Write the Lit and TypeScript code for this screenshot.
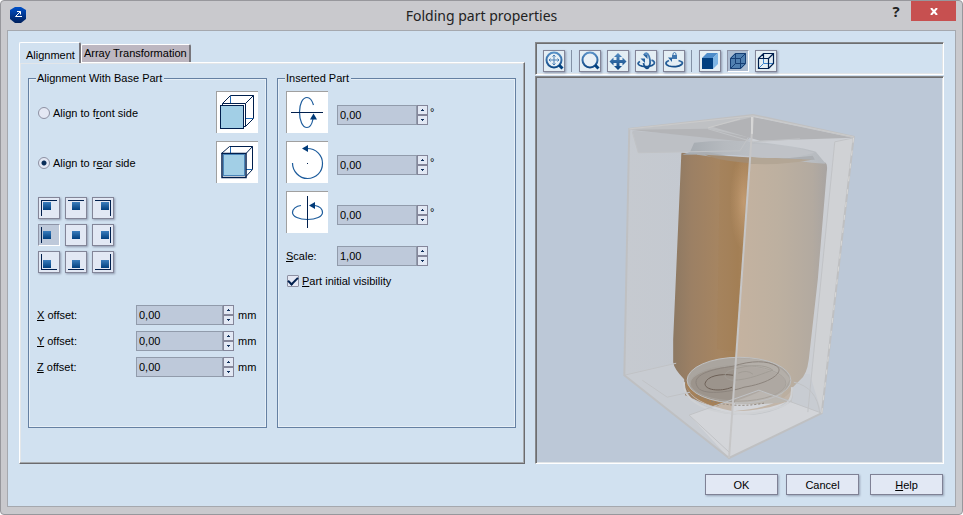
import { LitElement, html, css, svg, nothing } from "lit";
import { customElement, property, state } from "lit/decorators.js";
import { classMap } from "lit/directives/class-map.js";

const shared = css`
  * {
    box-sizing: border-box;
  }
  button,
  input {
    font: inherit;
    color: inherit;
    margin: 0;
    padding: 0;
    border-radius: 0;
  }
  svg {
    display: block;
  }
  u {
    text-underline-offset: 1px;
  }
`;

@customElement("spin-field")
export class SpinField extends LitElement {
  static styles = [
    shared,
    css`
      :host {
        display: flex;
        height: 20px;
      }
      .value {
        flex: 1;
        min-width: 0;
        padding: 0 2px;
        border: 1px solid #919bab;
        background: #bec9da;
        outline: none;
      }
      .steps {
        display: flex;
        flex-direction: column;
        width: 11px;
      }
      .step {
        flex: 1;
        min-height: 0;
        display: grid;
        place-items: center;
        border: 1px solid #84869a;
        background: #e2e8f4;
      }
    `,
  ];

  @property() value = "0,00";
  @property() label = "";

  private step(delta: number) {
    const n = Number(this.value.replace(",", ".")) + delta;
    this.value = n.toFixed(2).replace(".", ",");
  }

  render() {
    return html`
      <input
        class="value"
        type="text"
        aria-label=${this.label}
        .value=${this.value}
        @change=${(e: Event) => (this.value = (e.target as HTMLInputElement).value)}
      />
      <div class="steps">
        <button class="step" type="button" aria-label="Increase ${this.label}" @click=${() => this.step(1)}>
          <svg width="3" height="2" viewBox="0 0 3 2"><path d="M1 0h1v1h1v1H0V1h1z" fill="#10305c" /></svg>
        </button>
        <button class="step" type="button" aria-label="Decrease ${this.label}" @click=${() => this.step(-1)}>
          <svg width="3" height="2" viewBox="0 0 3 2"><path d="M0 0h3v1H2v1H1V1H0z" fill="#10305c" /></svg>
        </button>
      </div>
    `;
  }
}

const NAVY = "#003a78";
const BLUE = "#1d5c9c";

const frontBox = svg`
  <g fill="none" stroke="#001f4d">
    <path d="M14.5 5V12M30 27.5H37" stroke="#1f66b0" />
    <path d="M6.5 12.5L14.5 4.5H37.5V27.5L29.5 35.5M29.5 12.5L37.5 4.5" />
    <path d="M6.5 12.5H29.5V35.5H6.5Z" fill="#fff" />
    <rect x="4.5" y="14.5" width="23" height="23" fill="#a2cfe6" />
  </g>`;

const rearBox = svg`
  <g fill="none" stroke="#001f4d">
    <path d="M14.5 6V12M30 28.5H36" stroke="#1f66b0" />
    <path d="M5.5 12.5L13.5 5.5H36.5V28.5L29 36.5M30 12.5L36.5 5.5" />
    <rect x="6" y="12.5" width="24" height="24" fill="#fff" stroke-width="1.5" />
    <rect x="7.5" y="13.5" width="21" height="21" fill="#a2cfe6" stroke="#4a86ba" />
  </g>`;

const rotX = svg`
  <path d="M27.5 14C26 9 24 6.5 21 6.5C16.5 6.5 13.5 13 13.5 21C13.5 29.5 16.5 36.5 21 36.5C24 36.5 26 33 27 28" fill="none" stroke="${BLUE}" stroke-width="1.2" />
  <path d="M5 21.5H37" stroke="#001f4d" />
  <path d="M24 28.5L27.5 22.5L31 28.5Z" fill="${NAVY}" />`;

const rotZ = svg`
  <path d="M6.5 22C6.5 30 13 37.5 21.5 37.5S36.5 31 36.5 22.5S30 7.5 21 7.5" fill="none" stroke="${BLUE}" stroke-width="1.2" />
  <path d="M16 7.5L22 4V11Z" fill="${NAVY}" />
  <rect x="21" y="22" width="1" height="1" fill="#001f4d" />`;

const rotY = svg`
  <path d="M15 14.5C10 15 6.5 18 6.5 21.5C6.5 25.5 13 28.5 21.5 28.5S36.5 25.5 36.5 21.5C36.5 18 34 15.5 29 14.5" fill="none" stroke="${BLUE}" stroke-width="1.2" />
  <path d="M21.5 5V37" stroke="#001f4d" />
  <path d="M23 14.5L29 11V18Z" fill="${NAVY}" />`;

const picture = (content: unknown) =>
  html`<svg class="picture" width="42" height="42" viewBox="0 0 42 42" aria-hidden="true">${content}
    ${svg`<path d="M0 42V0H42" fill="none" stroke="#a0a0a0" stroke-width="2" />`}
  </svg>`;

const lens = svg`
  <circle cx="10" cy="9" r="7.5" fill="#e8f0f6" stroke="url(#ink)" stroke-width="2" />
  <path d="M15 14L18.5 17.5" stroke="#00407f" stroke-width="3" />`;

const tools: Record<string, unknown> = {
  fit: svg`${lens}<path d="M10 4V14M5 9H15M8.5 5.5L10 4L11.5 5.5M8.5 12.5L10 14L11.5 12.5M6.5 7.5L5 9L6.5 10.5M13.5 7.5L15 9L13.5 10.5" fill="none" stroke="#4a7eb4" />`,
  zoom: lens,
  pan: svg`<path d="M10 2L14 6H11.5V9H14.5V6.5L18.5 10.5L14.5 14.5V12H11.5V15H14L10 19L6 15H8.5V12H5.5V14.5L1.5 10.5L5.5 6.5V9H8.5V6H6Z" fill="url(#ink)" />`,
  orbit: svg`<path d="M8 4C9.5 1.5 11.5 1.5 13 5C14.5 9.5 14.5 14.5 12 17C10.5 18 8 16 7.5 12" fill="none" stroke="url(#ink)" stroke-width="1.8" />
    <path d="M4 10.5C1 12 1.5 14 6 15.2C10 16 16 15.5 18 13C19 11.5 18 10 15.5 9.2" fill="none" stroke="url(#ink)" stroke-width="1.8" />
    <path d="M4.5 7.5H9V12ZM7 3.5H11.5V8Z" fill="#27629f" />`,
  spin: svg`<rect x="8" y="4" width="5" height="4" fill="#3f76af" /><path d="M9 4V2.5Q10.5 .5 12 2.5V4" fill="none" stroke="#3f76af" />
    <path d="M5 9.5C1 11 1 13.5 5 15C9 16.2 15 16 17.5 13.5C19.5 11.5 18 10.5 14.5 9.5" fill="none" stroke="url(#ink)" stroke-width="1.8" />
    <path d="M4 6.5H8V11Z" fill="#27629f" />`,
  solid: svg`<path d="M2 7L7 2H18L13 7Z" fill="#4d8cca" /><path d="M13 7L18 2V13L13 18Z" fill="#7db4e4" /><rect x="2" y="7" width="11" height="11" fill="#003f80" />`,
  glass: svg`<path d="M2 7L7 2H18V13L13 18H2Z" fill="#507fb0" /><path d="M2.5 7.5H12.5V17.5H2.5ZM2.5 7.5L7.5 2.5H17.5V12.5L12.5 17.5M12.5 7.5L17.5 2.5M7.5 2.5V12.5H17.5M7.5 12.5L2.5 17.5" fill="none" stroke="#173f75" />`,
  wire: svg`<path d="M7.5 2.5V12.5H17.5M7.5 12.5L2.5 17.5" fill="none" stroke="#3c84cc" /><path d="M2.5 7.5H12.5V17.5H2.5ZM2.5 7.5L7.5 2.5H17.5V12.5L12.5 17.5M12.5 7.5L17.5 2.5M7.5 2.5V7" fill="none" stroke="#001f4d" stroke-width="1.2" />`,
};

const toolGroups = [
  [{ id: "fit", label: "Zoom to fit" }],
  [
    { id: "zoom", label: "Zoom" },
    { id: "pan", label: "Pan" },
    { id: "orbit", label: "Orbit" },
    { id: "spin", label: "Rotate around axis" },
  ],
  [
    { id: "solid", label: "Solid view" },
    { id: "glass", label: "Transparent view" },
    { id: "wire", label: "Wireframe view" },
  ],
];

const scene = svg`
  <defs>
    <linearGradient id="amber" x1="0" x2="1">
      <stop offset="0" stop-color="#8d7963" />
      <stop offset="0.12" stop-color="#9c8064" />
      <stop offset="0.3" stop-color="#a68561" />
      <stop offset="0.42" stop-color="#a48158" />
      <stop offset="0.55" stop-color="#ab875f" />
      <stop offset="1" stop-color="#b38f69" />
    </linearGradient>
    <linearGradient id="beige" x1="0" x2="1">
      <stop offset="0" stop-color="#c6b3a0" />
      <stop offset="0.5" stop-color="#bdb0a0" />
      <stop offset="0.85" stop-color="#b3aaa0" />
      <stop offset="1" stop-color="#a8a4a2" />
    </linearGradient>
    <linearGradient id="leftWall" x1="0" x2="1">
      <stop offset="0" stop-color="#c6cad0" />
      <stop offset="1" stop-color="#c2c8d1" />
    </linearGradient>
    <linearGradient id="collar" x1="0" x2="1">
      <stop offset="0" stop-color="#a3a9af" />
      <stop offset="0.3" stop-color="#b6babf" />
      <stop offset="0.75" stop-color="#c0c4c9" />
      <stop offset="1" stop-color="#b4b8bd" />
    </linearGradient>
    <radialGradient id="shine">
      <stop offset="0" stop-color="#cda57c" stop-opacity="0.7" />
      <stop offset="1" stop-color="#c8a078" stop-opacity="0" />
    </radialGradient>
    <clipPath id="leftHalf"><path d="M600 100H754L729 470H600Z" /></clipPath>
    <clipPath id="rightHalf"><path d="M754 100H880V470H729Z" /></clipPath>
  </defs>
  <path d="M629 129L753 116L729 459L624 376Z" fill="url(#leftWall)" />
  <path d="M753 116L854 137L822 414L729 459Z" fill="#cccfd4" />
  <path d="M835 142L854 138L822 414L808 415Z" fill="#d0d2d5" />
  <path d="M624 376L676 364L810 375L822 414L729 459Z" fill="#c8ccd2" />
  <path d="M629 130L753 116L748 140L718 132Z" fill="#bfc1c4" />
  <path d="M632 131L750 140L740 151L638 153Z" fill="#bdc0c5" />
  <path d="M712 127L753 117L853 138L760 141Z" fill="#b2b3b6" />
  <path d="M629 130L708 129L750 138L745 142Z" fill="#b3b4b7" />
  <g clip-path="url(#leftHalf)">
    <path d="M682 153Q681 152 681 158L673 340V363Q674 370 684 380L685 396Q740 424 792 402L793 388L808 372L827 165Z" fill="url(#amber)" />
    <path d="M720 160L717 350L735 352L749 160Z" fill="#a37a4c" opacity="0.15" />
    <ellipse cx="744" cy="202" rx="14" ry="50" fill="url(#shine)" />
  </g>
  <g clip-path="url(#rightHalf)">
    <path d="M740 155L826 163Q828 165 827 172L818 280L809 360Q807 376 800 381L793 388L792 402Q760 416 729 412Z" fill="url(#beige)" />
  </g>
  <path d="M682 155L690 152L694 143Q725 139 765 143Q805 148 816 152L826 164L812 163Q750 153 682 155Z" fill="url(#collar)" />
  <path d="M697 150Q750 164 813 156L815 160Q755 164 697 155Z" fill="#abaeb2" />
  <path d="M705 155Q750 158 803 160Q768 167 736 162Q716 160 705 155Z" fill="#a38b70" />
  <path d="M750 157L812 160Q780 166 749 164Z" fill="#b3a695" />
  <path d="M750 144Q790 145 815 153Q785 161 750 157Z" fill="#bfc2c7" />
  <path d="M689 416L759 391L822 414L729 459Z" fill="#d3d5d9" />
  <path d="M684 385Q685 405 738 416Q790 413 793 390L792 402Q765 421 724 414Q687 404 684 385Z" fill="#c4c7cb" />
  <path d="M685 384Q690 402 713 407L733 397V412Q778 409 792 391L790 401Q765 412 733 412Q690 404 685 384Z" fill="#c2b5a8" />
  <path d="M685 384Q690 401 717 407L734 398V368Z" fill="#a58159" />
  <ellipse cx="739" cy="381" rx="52" ry="23" fill="#aaa59f" />
  <ellipse cx="738" cy="385" rx="48" ry="18" fill="#9c948c" />
  <path d="M735 402Q755 395 760 392L791 401Q776 406 735 405Z" fill="#bbb7b1" />
  <path d="M736 359Q777 358 790 380L781 398Q758 404 733 402Z" fill="#bab6b1" opacity="0.6" />
  <g fill="none">
    <ellipse cx="739" cy="381" rx="52" ry="23" stroke="#bfc0c1" />
    <ellipse cx="738" cy="384" rx="48" ry="18" stroke="#a7a29c" />
    <path d="M733 367C710 370 691 376 697 387C701 397 730 393 744 388C770 384 785 373 777 367C768 361 751 361 733 367Z" stroke="#8c847c" />
    <path d="M733 376C720 374 707 377 705 384C704 391 720 393 732 388" stroke="#6c5f55" />
    <path d="M734 370C724 372 721 379 732 381C750 381 765 373 773 371C766 365 750 365 734 370ZM738 374Q747 370 753 375" stroke="#a29d96" />
    <path d="M696 396Q727 411 764 404" stroke="#8a8075" stroke-dasharray="2 2" />
    <path d="M684 383Q682 401 712 411Q747 420 783 407Q793 402 792 388" stroke="#cfd1d4" stroke-width="2" />
    <path d="M624 376L676 364M642 381L667 398L690 393M794 383Q817 388 820 414M689 416L729 453M689 416L759 391L822 414M808 413L835 142L854 138M632 132L638 153L740 151L748 138M708 129L753 142L800 139" stroke="#c1c3c6" />
    <path d="M629 129L624 376L729 459L822 414L854 137L753 115Z" stroke="#bfc0c2" stroke-width="2" />
    <path d="M822 414L854 137" stroke="#d9d9d8" stroke-dasharray="5 8" />
    <path d="M753 117L729 459" stroke="#c6c6c7" stroke-width="2" />
    <path d="M752 117V134" stroke="#d6d6d6" stroke-width="2" />
    <path d="M629 129L753 116L854 137M708 128L740 119" stroke="#cbcbcb" />
  </g>`;

@customElement("app-root")
export class AppRoot extends LitElement {
  static styles = [
    shared,
    css`
      :host {
        display: block;
        background: #fff;
        color: #000;
        font: 11px/14px "Liberation Sans", Arial, sans-serif;
      }
      .window {
        display: flex;
        flex-direction: column;
        min-height: 100vh;
        padding: 0 6px 7px;
        border: 1px solid #97979c;
        border-radius: 4px;
        background: #c9c9cd;
      }
      .titlebar {
        display: grid;
        grid-template-columns: 1fr auto 1fr;
        height: 29px;
      }
      .logo {
        margin: 6px 0 0 3px;
      }
      .title {
        margin: 0;
        font: 14px/30px "Noto Sans", sans-serif;
        color: #222;
      }
      .caption {
        display: flex;
        justify-content: flex-end;
        align-items: flex-start;
        gap: 8px;
      }
      .help {
        width: 14px;
        height: 20px;
        border: 0;
        background: none;
        font: bold 15px/20px "Open Sans", sans-serif;
        color: #222;
      }
      .close {
        display: grid;
        place-items: center;
        width: 45px;
        height: 20px;
        border: 0;
        background: #c75050;
      }
      .client {
        flex: 1;
        display: flex;
        flex-direction: column;
        gap: 10px;
        padding: 11px;
        border: 1px solid #a5a8ae;
        background: #d1e1f0;
      }
      .body {
        flex: 1;
        display: grid;
        grid-template-columns: minmax(0, 506fr) minmax(0, 409fr);
        gap: 10px;
      }
      .settings {
        display: flex;
        flex-direction: column;
      }
      .tabs {
        display: flex;
        align-items: flex-end;
        height: 20px;
      }
      .tab {
        border: 1px solid #fff;
        border-right: 2px solid #77757b;
        border-bottom: 0;
        border-radius: 2px 2px 0 0;
        white-space: nowrap;
        height: 18px;
        padding: 0 2px 2px;
        background: #bdb7c1;
      }
      .tab.active {
        height: 21px;
        margin-bottom: -1px;
        padding: 3px 4px 0 6px;
        background: #d1e1f0;
        z-index: 1;
      }
      .panel {
        flex: 1;
        display: grid;
        grid-template-columns: 1fr 1fr;
        gap: 10px;
        padding: 8px 8px 35px;
        border: 1px solid;
        border-color: #fff #6b6b6e #6b6b6e #fff;
        box-shadow: inset -1px -1px #a5a9ad, inset 1px 1px #e3e6e9;
      }
      .group {
        min-width: 0;
        margin: 0;
        padding: 0 8px;
        border: 1px solid #6580a2;
        box-shadow: inset 0 0 0 1px #e6eff7;
      }
      .group legend {
        padding: 0 2px 0 1px;
        margin-left: -1px;
        background: #d1e1f0;
      }
      .rows {
        display: flex;
        flex-direction: column;
        gap: 8px;
        padding-top: 6px;
      }
      .row {
        display: flex;
        align-items: center;
      }
      .picture {
        background: #fff;
      }
      .choice {
        display: flex;
        align-items: center;
        flex: 1;
        gap: 3px;
        padding-left: 1px;
      }
      .side {
        padding-top: 2px;
      }
      .radio,
      .check {
        appearance: none;
        width: 12px;
        height: 12px;
        border: 1px solid #8d90a2;
        background: #e4e8f4;
      }
      .radio {
        border-radius: 50%;
      }
      .radio:checked {
        background: radial-gradient(circle, #0a2d58 0 2px, #e4e8f4 3px);
      }
      .check {
        display: grid;
        place-items: center;
        border-radius: 1px;
      }
      .check:checked::before {
        content: "";
        width: 8px;
        height: 4px;
        border: solid #001f4d;
        border-width: 0 0 2px 2px;
        transform: translateY(-1px) rotate(-45deg);
      }
      .anchors {
        display: grid;
        grid-template-columns: repeat(3, 22px);
        gap: 5px;
        padding: 14px 0 0 1px;
      }
      .key {
        width: 22px;
        height: 22px;
        border: 1px solid #838598;
        background: #e2e8f4;
        box-shadow: 1px 1px 2px #8e99ae;
      }
      .key.on {
        border-color: #8d93a6 #fff #fff #8d93a6;
        background: #bec9da;
        box-shadow: none;
      }
      .offsets {
        display: flex;
        flex-direction: column;
        gap: 6px;
        padding-top: 32px;
      }
      .offset-label {
        width: 99px;
      }
      .offset {
        width: 98px;
      }
      .unit {
        margin-left: 4px;
      }
      .turn {
        width: 91px;
        margin: 6px 0 0 9px;
      }
      .degree {
        margin-left: 2px;
      }
      .scale-row {
        padding-top: 5px;
      }
      .scale-label {
        width: 51px;
      }
      .scale {
        width: 91px;
      }
      .preview {
        display: flex;
        flex-direction: column;
        gap: 1px;
        min-width: 0;
      }
      .well {
        border: 1px solid;
        border-color: #87898c #fff #fff #87898c;
        box-shadow: inset 1px 1px #6d6e70, inset -1px -1px #e1e5e8;
      }
      .toolbar {
        display: flex;
        align-items: center;
        gap: 6px;
        height: 33px;
        padding: 4px 7px 0;
      }
      .tools {
        display: flex;
        gap: 6px;
      }
      .tools + .tools {
        padding-left: 8px;
        background: linear-gradient(#8391a5, #8391a5) no-repeat 0 0 / 1px 100%;
      }
      .tools .key {
        background: #e4eef4;
      }
      .tools .key.on {
        background: #adbdd2;
      }
      .viewport {
        flex: 1;
        display: flex;
        min-height: 0;
        padding: 1px;
        background: #bcc8d7;
      }
      .scene {
        flex: 1;
        min-width: 0;
        height: 0;
        min-height: 100%;
      }
      .actions {
        display: flex;
        justify-content: flex-end;
        gap: 8px;
        padding-right: 1px;
      }
      .action {
        width: 73px;
        height: 21px;
        border: 1px solid #7f8195;
        background: #e2e8f4;
        box-shadow: 1px 1px 2px #96a2b5;
      }
      .action:last-child {
        margin-left: 3px;
      }
    `,
  ];

  @state() private tab = 0;
  @state() private anchor = 3;
  @state() private view = "glass";

  private anchorKey(i: number) {
    const col = i % 3;
    const row = Math.floor(i / 3);
    const x = [4, 6, 8][col];
    const y = [4, 6, 8][row];
    return html`<button
      type="button"
      class=${classMap({ key: true, on: this.anchor === i })}
      aria-label="Anchor ${["top", "middle", "bottom"][row]} ${["left", "center", "right"][col]}"
      @click=${() => (this.anchor = i)}
    >
      <svg width="20" height="20" viewBox="0 0 20 20">
        <rect x=${x} y=${y} width="8" height="8" fill="url(#square)" />
        <defs>
          <linearGradient id="square" x2="0" y2="1">
            <stop offset="0" stop-color="#3a7dbd" />
            <stop offset="1" stop-color="#003f7f" />
          </linearGradient>
        </defs>
        ${col !== 1 ? svg`<path d=${col === 0 ? "M2.5 2V18" : "M17.5 2V18"} stroke="#001f4d" />` : nothing}
        ${row !== 1 ? svg`<path d=${row === 0 ? "M2 2.5H18" : "M2 17.5H18"} stroke="#001f4d" />` : nothing}
      </svg>
    </button>`;
  }

  private turnRow(icon: unknown, label: string) {
    return html`<div class="row">
      ${picture(icon)}
      <spin-field class="turn" label=${label}></spin-field>
      <span class="degree">°</span>
    </div>`;
  }

  render() {
    return html`
      <main class="window">
        <header class="titlebar">
          <svg class="logo" width="16" height="16" viewBox="0 0 16 16" aria-hidden="true">
            <defs>
              <linearGradient id="badge" x2="0" y2="1">
                <stop offset="0" stop-color="#0050c8" />
                <stop offset="1" stop-color="#00205c" />
              </linearGradient>
            </defs>
            <path d="M5 0H11L16 3V12L11 16H5L0 12V3Z" fill="url(#badge)" />
            <path d="M7 4.5H10.5V7.5M10.5 4.5L5.5 9.5H12" fill="none" stroke="#fff" />
          </svg>
          <h1 class="title">Folding part properties</h1>
          <div class="caption">
            <button class="help" type="button" aria-label="Context help">?</button>
            <button class="close" type="button" aria-label="Close">
              <svg width="8" height="7" viewBox="0 0 8 7"><path d="M1 0L7 7M7 0L1 7" stroke="#fff" stroke-width="2" /></svg>
            </button>
          </div>
        </header>
        <div class="client">
          <div class="body">
            <section class="settings">
              <div class="tabs" role="tablist">
                ${["Alignment", "Array Transformation"].map(
                  (name, i) => html`<button
                    type="button"
                    role="tab"
                    aria-selected=${this.tab === i}
                    class=${classMap({ tab: true, active: this.tab === i })}
                    @click=${() => (this.tab = i)}
                  >${name}</button>`
                )}
              </div>
              <div class="panel" role="tabpanel">
                <fieldset class="group">
                  <legend>Alignment With Base Part</legend>
                  <div class="rows">
                    <div class="row">
                      <label class="choice side"><input class="radio" type="radio" name="side" /><span>Align to f<u>r</u>ont side</span></label>
                      ${picture(frontBox)}
                    </div>
                    <div class="row">
                      <label class="choice side"><input class="radio" type="radio" name="side" checked /><span>Align to r<u>e</u>ar side</span></label>
                      ${picture(rearBox)}
                    </div>
                  </div>
                  <div class="anchors">${[0, 1, 2, 3, 4, 5, 6, 7, 8].map((i) => this.anchorKey(i))}</div>
                  <div class="offsets">
                    ${["X", "Y", "Z"].map(
                      (axis) => html`<div class="row">
                        <span class="offset-label"><u>${axis}</u> offset:</span>
                        <spin-field class="offset" label="${axis} offset"></spin-field>
                        <span class="unit">mm</span>
                      </div>`
                    )}
                  </div>
                </fieldset>
                <fieldset class="group">
                  <legend>Inserted Part</legend>
                  <div class="rows">
                    ${this.turnRow(rotX, "Rotation about X")}
                    ${this.turnRow(rotZ, "Rotation about Z")}
                    ${this.turnRow(rotY, "Rotation about Y")}
                    <div class="row scale-row">
                      <span class="scale-label"><u>S</u>cale:</span>
                      <spin-field class="scale" label="Scale" value="1,00"></spin-field>
                    </div>
                    <label class="choice"><input class="check" type="checkbox" checked /><span><u>P</u>art initial visibility</span></label>
                  </div>
                </fieldset>
              </div>
            </section>
            <section class="preview">
              <div class="well toolbar" role="toolbar" aria-label="View">
                ${toolGroups.map(
                  (group) => html`<div class="tools">
                    ${group.map(
                      (t) => html`<button
                        type="button"
                        class=${classMap({ key: true, on: this.view === t.id })}
                        aria-label=${t.label}
                        @click=${() => (this.view = t.id)}
                      >
                        <svg width="20" height="20" viewBox="0 0 20 20">
                          <defs>
                            <linearGradient id="ink" gradientUnits="userSpaceOnUse" x1="0" y1="0" x2="0" y2="20">
                              <stop offset="0" stop-color="#5f97cd" />
                              <stop offset="1" stop-color="#003a78" />
                            </linearGradient>
                          </defs>
                          ${tools[t.id]}
                        </svg>
                      </button>`
                    )}
                  </div>`
                )}
              </div>
              <div class="well viewport">
                <svg class="scene" viewBox="537 78 405 385" role="img" aria-label="Can inside a transparent box">${scene}</svg>
              </div>
            </section>
          </div>
          <footer class="actions">
            <button class="action" type="button">OK</button>
            <button class="action" type="button">Cancel</button>
            <button class="action" type="button"><u>H</u>elp</button>
          </footer>
        </div>
      </main>
    `;
  }
}
